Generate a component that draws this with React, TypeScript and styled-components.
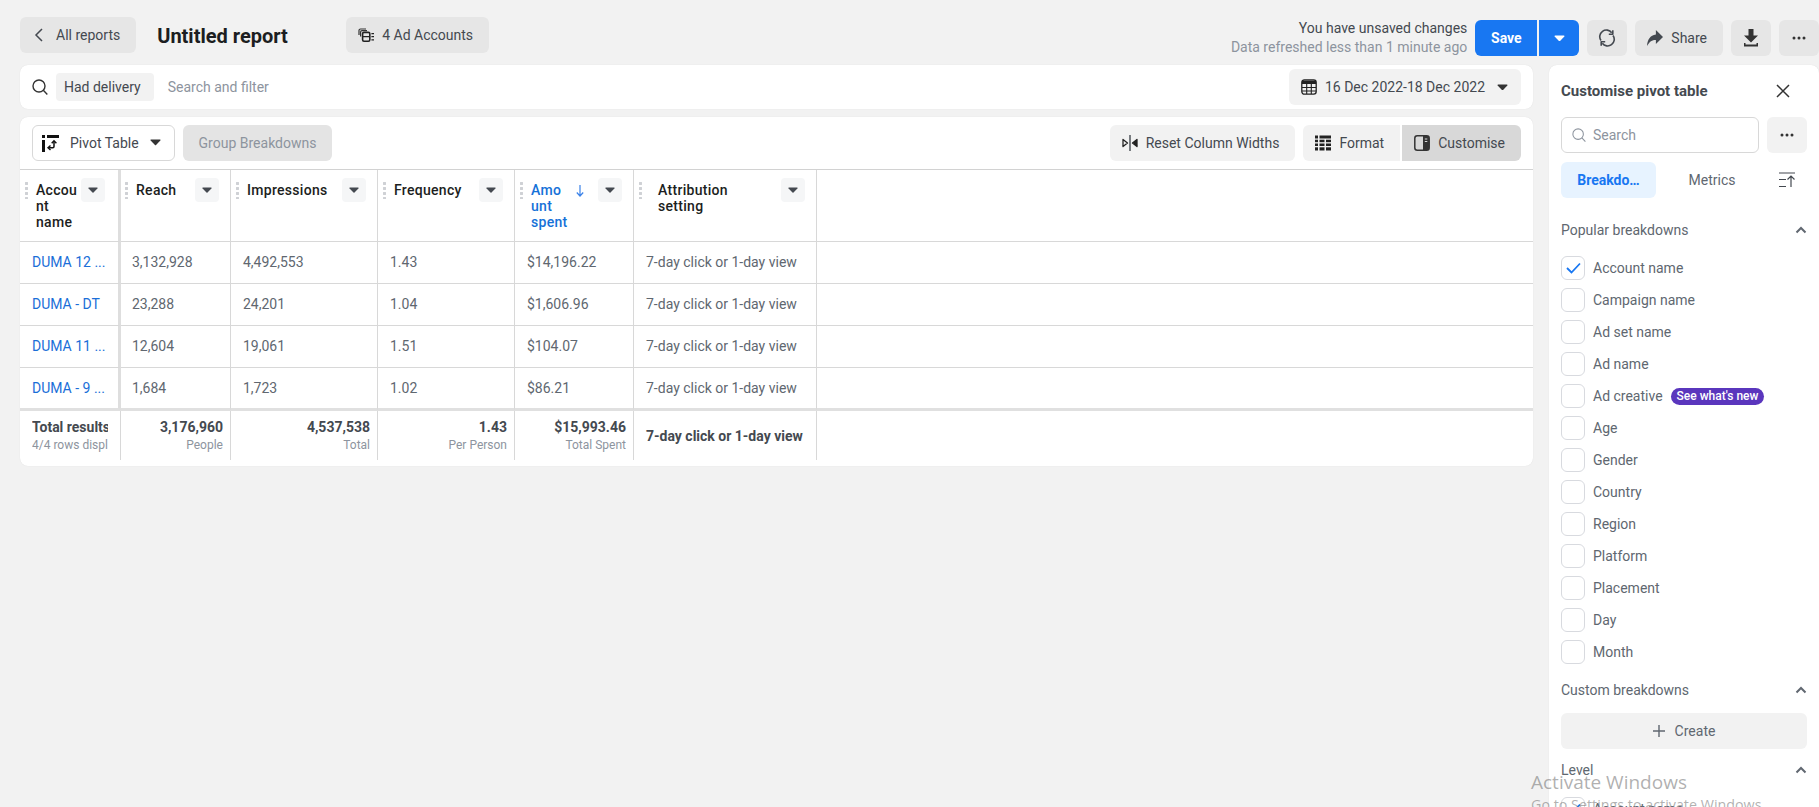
import React from "react";
import styled, { createGlobalStyle } from "styled-components";

const Global = createGlobalStyle`
  html, body { margin: 0; padding: 0; background: #f2f2f2; }
  body { font-family: Roboto, "Liberation Sans", sans-serif; font-size: 14px; color: #444950; }
  * { box-sizing: border-box; }
`;

const Page = styled.div`
  position: relative;
  width: 1819px;
  height: 807px;
  overflow: hidden;
  background: #f2f2f2;
`;

const TopBar = styled.header`
  display: flex;
  align-items: flex-start;
  height: 65px;
  padding: 17px 0 0 20px;
`;

const Button = styled.div<{ $bg?: string; $color?: string; $pl?: number; $pr?: number; $gap?: number; $w?: number }>`
  display: flex;
  align-items: center;
  justify-content: ${(p) => (p.$w ? "center" : "flex-start")};
  flex: none;
  height: 36px;
  width: ${(p) => (p.$w ? `${p.$w}px` : "auto")};
  padding: ${(p) => (p.$w ? "0" : `0 ${p.$pr ?? 16}px 0 ${p.$pl ?? 12}px`)};
  gap: ${(p) => p.$gap ?? 8}px;
  border-radius: 6px;
  background: ${(p) => p.$bg ?? "#e6e6e6"};
  color: ${(p) => p.$color ?? "#444950"};
  font-size: 14px;
  white-space: nowrap;
`;

const Title = styled.h1`
  flex: none;
  width: 130px;
  margin: 6px 59px 0 21px;
  font-size: 20px;
  line-height: 26px;
  font-weight: 700;
  color: #1c1e21;
  white-space: nowrap;
`;

const TopRight = styled.div`
  display: flex;
  align-items: center;
  gap: 8px;
  margin: 2px 0 0 auto;
`;

const Status = styled.div`
  text-align: right;
  font-size: 14px;
  line-height: 19px;
  color: #444950;
  white-space: nowrap;
`;

const StatusSub = styled.div`
  color: #8d949e;
`;

const SaveGroup = styled.div`
  display: flex;
  gap: 2px;
`;

const SaveButton = styled(Button)`
  border-radius: 6px 0 0 6px;
  font-weight: 700;
`;

const SaveCaret = styled(Button)`
  border-radius: 0 6px 6px 0;
`;

const Main = styled.main`
  display: flex;
  gap: 16px;
  height: 742px;
  padding-left: 20px;
`;

const LeftColumn = styled.section`
  flex: none;
  width: 1513px;
  display: flex;
  flex-direction: column;
  gap: 8px;
`;

const FilterBar = styled.div`
  display: flex;
  align-items: center;
  height: 44px;
  padding: 0 12px;
  background: #fff;
  border-radius: 8px;
  box-shadow: 0 0 1px rgba(0, 0, 0, 0.12);
`;

const Chip = styled.div`
  display: flex;
  align-items: center;
  height: 28px;
  margin-left: 8px;
  padding: 0 13px 0 8px;
  background: #f2f2f2;
  border-radius: 4px;
  color: #444950;
`;

const Placeholder = styled.div`
  margin-left: 14px;
  color: #8d949e;
`;

const DateButton = styled(Button)`
  margin-left: auto;
  background: #f2f2f2;
`;

const DateCaret = styled.span`
  display: flex;
  margin-left: 4px;
`;

const TableCard = styled.div`
  height: 349px;
  background: #fff;
  border-radius: 8px;
  box-shadow: 0 0 1px rgba(0, 0, 0, 0.12);
`;

const Toolbar = styled.div`
  display: flex;
  align-items: center;
  gap: 8px;
  height: 53px;
  padding: 0 12px 1px;
  border-bottom: 1px solid #d2d2d2;
`;

const PivotButton = styled(Button)`
  background: #fff;
  border: 1px solid #d8d8d8;
`;

const ToolbarRight = styled.div`
  display: flex;
  gap: 8px;
  margin-left: auto;
`;

const Segment = styled.div`
  display: flex;
  gap: 2px;
`;

const SegmentLeft = styled(Button)`
  border-radius: 6px 0 0 6px;
`;

const SegmentRight = styled(Button)`
  border-radius: 0 6px 6px 0;
`;

const Grid = styled.div`
  display: grid;
  grid-template-columns: 101px 110px 147px 137px 119px 183px 1fr;
  grid-template-rows: 72px 42px 42px 42px 43px 49px;
`;

const HeaderCell = styled.div<{ $thick?: boolean; $pl?: number }>`
  display: flex;
  align-items: flex-start;
  padding: 8px ${(p) => (p.$thick ? 13 : 11)}px 0 ${(p) => p.$pl ?? 5}px;
  border-bottom: 1px solid #d8d8d8;
  border-right: ${(p) => (p.$thick ? "3px" : "1px")} solid ${(p) => (p.$thick ? "#dedede" : "#d8d8d8")};
`;

const Grip = styled.span`
  flex: none;
  width: 3px;
  height: 18px;
  margin-top: 3px;
  background: radial-gradient(circle, #cfd1d5 1.4px, transparent 1.6px) 0 0 / 3px 5px repeat-y;
`;

const HeaderLabel = styled.div<{ $indent?: number; $active?: boolean }>`
  flex: 1;
  display: block;
  margin: 4px 0 0 ${(p) => p.$indent ?? 8}px;
  font-size: 14px;
  line-height: 16px;
  font-weight: 500;
  letter-spacing: 0.3px;
  color: ${(p) => (p.$active ? "#1571d8" : "#1c1e21")};
  white-space: nowrap;
`;

const SortArrow = styled.span`
  display: inline-block;
  margin-left: 15px;
  vertical-align: -2px;
  line-height: 0;
`;

const CaretBox = styled.div`
  flex: none;
  display: flex;
  align-items: center;
  justify-content: center;
  width: 24px;
  height: 24px;
  background: #f5f6f7;
  border-radius: 4px;
`;

const BodyCell = styled.div<{ $thick?: boolean; $heavy?: boolean; $pl?: number }>`
  display: flex;
  align-items: center;
  min-width: 0;
  padding: 0 0 ${(p) => (p.$heavy ? 0 : 1)}px ${(p) => p.$pl ?? 12}px;
  border-bottom: ${(p) => (p.$heavy ? "3px solid #e0e0e0" : "1px solid #d8d8d8")};
  border-right: ${(p) => (p.$thick ? "3px solid #dedede" : "1px solid #d8d8d8")};
  color: #606770;
  white-space: nowrap;
`;

const AccountLink = styled.span`
  color: #1a6ed8;
`;

const FillerCell = styled.div<{ $heavy?: boolean }>`
  border-bottom: ${(p) => (p.$heavy ? "3px solid #e0e0e0" : "1px solid #d8d8d8")};
`;

const FooterCell = styled.div<{ $align?: string }>`
  display: flex;
  flex-direction: column;
  justify-content: center;
  align-items: ${(p) => p.$align ?? "flex-end"};
  min-width: 0;
  padding: 0 7px 0 12px;
  border-right: 1px solid #d8d8d8;
  overflow: hidden;
  white-space: nowrap;
`;

const FooterMain = styled.div`
  font-weight: 700;
  font-size: 14px;
  line-height: 18px;
  color: #444950;
`;

const FooterSub = styled.div`
  font-size: 12px;
  line-height: 18px;
  color: #8d949e;
`;

const ClipBox = styled.div`
  width: 76px;
  overflow: hidden;
`;

const Panel = styled.aside`
  flex: none;
  width: 270px;
  height: 742px;
  padding: 0 12px;
  background: #fff;
  border-radius: 8px 8px 0 0;
  box-shadow: 0 0 1px rgba(0, 0, 0, 0.12);
  overflow: hidden;
`;

const PanelHead = styled.div`
  display: flex;
  align-items: center;
  justify-content: space-between;
  height: 52px;
`;

const PanelTitle = styled.div`
  font-size: 15px;
  font-weight: 700;
  color: #444950;
`;

const CloseWrap = styled.span`
  display: flex;
  margin-right: 17px;
`;

const SearchRow = styled.div`
  display: flex;
  gap: 8px;
`;

const SearchInput = styled.div`
  display: flex;
  align-items: center;
  gap: 7px;
  flex: 1;
  height: 36px;
  padding: 0 10px;
  border: 1px solid #d8d8d8;
  border-radius: 6px;
  color: #8d949e;
`;

const Tabs = styled.div`
  display: flex;
  align-items: center;
  margin-top: 9px;
  height: 36px;
`;

const Tab = styled.div<{ $active?: boolean }>`
  display: flex;
  align-items: center;
  justify-content: center;
  flex: none;
  width: ${(p) => (p.$active ? 95 : 112)}px;
  height: 36px;
  border-radius: 6px;
  background: ${(p) => (p.$active ? "#e7f3ff" : "transparent")};
  color: ${(p) => (p.$active ? "#1877f2" : "#606770")};
  font-weight: ${(p) => (p.$active ? 700 : 400)};
`;

const SortIconWrap = styled.div`
  flex: 1;
  display: flex;
  justify-content: center;
`;

const SectionHead = styled.div<{ $mt: number }>`
  display: flex;
  align-items: center;
  justify-content: space-between;
  height: 24px;
  margin-top: ${(p) => p.$mt}px;
  color: #606770;
`;

const ChevronWrap = styled.span`
  display: flex;
`;

const CheckList = styled.div<{ $mt: number }>`
  margin-top: ${(p) => p.$mt}px;
`;

const CheckRow = styled.div`
  display: flex;
  align-items: center;
  height: 32px;
  gap: 8px;
  color: #606770;
`;

const CheckBox = styled.div`
  flex: none;
  display: flex;
  align-items: center;
  justify-content: center;
  width: 24px;
  height: 24px;
  border: 1px solid #d8dadf;
  border-radius: 6px;
`;

const Badge = styled.span`
  display: inline-flex;
  align-items: center;
  height: 17px;
  padding: 0 6px;
  border-radius: 9px;
  background: #5a36bd;
  color: #fff;
  font-size: 12px;
  font-weight: 500;
`;

const CreateButton = styled.div`
  display: flex;
  align-items: center;
  justify-content: center;
  gap: 10px;
  height: 36px;
  margin-top: 11px;
  background: #f2f2f2;
  border-radius: 6px;
  color: #606770;
`;

const Activation = styled.div`
  position: absolute;
  left: 1531px;
  top: 769px;
  font-family: "Open Sans", sans-serif;
  color: rgba(110, 110, 110, 0.55);
  white-space: nowrap;
  pointer-events: none;
`;

const ActivationTitle = styled.div`
  font-size: 19px;
  line-height: 26px;
`;

const ActivationSub = styled.div`
  font-size: 14.3px;
  line-height: 19px;
`;

/* ---------- icons ---------- */

const Caret = ({ w = 10, c = "#444950" }: { w?: number; c?: string }) => (
  <svg width={w} height={w * 0.6} viewBox="0 0 10 6">
    <path d="M1 .5h8c.5 0 .7.5.4.9L5.5 5.4c-.3.3-.7.3-1 0L.6 1.4C.3 1 .5.5 1 .5z" fill={c} />
  </svg>
);

const ChevronLeft = () => (
  <svg width="16" height="16" viewBox="0 0 16 16" fill="none" stroke="#444950" strokeWidth="1.5">
    <path d="M11 2 5 8l6 6" />
  </svg>
);

const AccountsIcon = () => (
  <svg width="16" height="16" viewBox="0 0 16 16" fill="none">
    <path d="M1 8V3.5C1 2.7 1.7 2 2.5 2H8" stroke="#333" strokeWidth="1.2" />
    <path d="M2.6 9.5V5c0-.8.6-1.4 1.4-1.4h5" stroke="#333" strokeWidth="1.2" />
    <rect x="4.6" y="5.4" width="7.2" height="8.8" rx="1.4" stroke="#222" strokeWidth="1.6" />
    <path d="M4.8 9.7h7M13.4 6.6H16M13.4 9.7H16M13.4 12.8H16" stroke="#222" strokeWidth="1.3" />
  </svg>
);

const SearchIcon = ({ s = 16, c = "#333", sw = 1.4 }: { s?: number; c?: string; sw?: number }) => (
  <svg width={s} height={s} viewBox="0 0 16 16" fill="none" stroke={c} strokeWidth={sw}>
    <circle cx="7" cy="7" r="6" />
    <path d="m11.3 11.3 4 4.2" />
  </svg>
);

const CalendarIcon = () => (
  <svg width="16" height="16" viewBox="0 0 16 16" fill="none">
    <rect x=".8" y=".8" width="14.4" height="14.4" rx="2.6" stroke="#222" strokeWidth="1.3" />
    <path d="M1 1.5h14V5H1z" fill="#222" />
    <path d="M1 8.5h14M1 12h14M5.7 5v10M10.3 5v10" stroke="#222" strokeWidth="1.1" />
  </svg>
);

const PivotIcon = () => (
  <svg width="17" height="18" viewBox="0 0 17 18" fill="none">
    <path d="M0 1h3v3H0zM5 1h12v3H5zM0 6h3v12H0z" fill="#111" />
    <path d="M12 7.5v5c0 .8-.5 1.2-1.2 1.2H6.5" stroke="#111" strokeWidth="1.5" />
    <path d="m8.5 11.5-2.5 2.3 2.5 2.3M9.7 9.3 12 6.8l2.4 2.5" stroke="#111" strokeWidth="1.4" />
  </svg>
);

const ResetIcon = () => (
  <svg width="16" height="16" viewBox="0 0 16 16" fill="none">
    <path d="M8 0v16" stroke="#444950" strokeWidth="1.4" />
    <path d="M1 4.5 5.5 8 1 11.5z" stroke="#222" strokeWidth="1.3" strokeLinejoin="round" />
    <path d="M15 4.5 10.5 8l4.5 3.5z" fill="#222" stroke="#222" strokeWidth="1.3" strokeLinejoin="round" />
  </svg>
);

const FormatIcon = () => (
  <svg width="16" height="16" viewBox="0 0 16 16" fill="#222">
    <rect x="0" y="0.5" width="3" height="3" />
    <rect x="4.5" y="0.5" width="11.5" height="3" />
    <rect x="0" y="4.7" width="3" height="2.5" />
    <rect x="4.5" y="4.7" width="5" height="2.5" />
    <rect x="11" y="4.7" width="5" height="2.5" />
    <rect x="0" y="8.5" width="3" height="2.5" />
    <rect x="4.5" y="8.5" width="5" height="2.5" />
    <rect x="11" y="8.5" width="5" height="2.5" />
    <rect x="0" y="12.3" width="3" height="3.2" />
    <rect x="4.5" y="12.3" width="5" height="3.2" />
    <rect x="11" y="12.3" width="5" height="3.2" />
  </svg>
);

const CustomiseIcon = () => (
  <svg width="16" height="16" viewBox="0 0 16 16" fill="none">
    <rect x="0.8" y="0.8" width="14.4" height="14.4" rx="2.5" stroke="#333" strokeWidth="1.5" />
    <path d="M9 1h4.5A1.5 1.5 0 0 1 15 2.5v11a1.5 1.5 0 0 1-1.5 1.5H9z" fill="#333" />
    <path d="M10.8 4h2.5M10.8 6.5h2.5" stroke="#d8d8d8" strokeWidth="1" />
  </svg>
);

const RefreshIcon = () => (
  <svg width="18" height="18" viewBox="0 0 18 18" fill="none" stroke="#444950" strokeWidth="1.6">
    <path d="M3 11.5A6.5 6.5 0 0 1 13.7 3.8" />
    <path d="M15 6.5A6.5 6.5 0 0 1 4.3 14.2" />
    <path d="M14.8 1.2v4h-4" strokeLinejoin="round" />
    <path d="M3.2 16.8v-4h4" strokeLinejoin="round" />
  </svg>
);

const ShareIcon = () => (
  <svg width="16" height="16" viewBox="0 0 18 16" fill="#444950" preserveAspectRatio="none">
    <path d="M10 0l8 7-8 7v-4C5.5 10 3 11.5 0 16c.5-6 3.5-11 10-11.5z" />
  </svg>
);

const DownloadIcon = () => (
  <svg width="16" height="18" viewBox="0 0 16 18" fill="#333">
    <path d="M5.5 0h5v6.5H15L8 13.500 1 6.500h4.500z" />
    <path d="M1 14h1.5v1.5h11V14H15v3.500H1z" />
  </svg>
);

const Dots = () => (
  <svg width="14" height="4" viewBox="0 0 14 4" fill="#333">
    <circle cx="2" cy="2" r="1.5" />
    <circle cx="7" cy="2" r="1.5" />
    <circle cx="12" cy="2" r="1.5" />
  </svg>
);

const DownArrow = ({ c = "#3b82e8", w = 8, h = 13 }: { c?: string; w?: number; h?: number }) => (
  <svg width={w} height={h} viewBox="0 0 8 13" fill="none" stroke={c} strokeWidth="1.2">
    <path d="M4 1v11M.8 8.5 4 12l3.2-3.5" />
  </svg>
);

const CloseIcon = () => (
  <svg width="14" height="14" viewBox="0 0 14 14" stroke="#333" strokeWidth="1.5" fill="none">
    <path d="m1 1 12 12M13 1 1 13" />
  </svg>
);

const SortIcon = () => (
  <svg width="17" height="16" viewBox="0 0 17 16" fill="none" stroke="#444950" strokeWidth="1.2">
    <path d="M0 1h16M0 7.5h7M0 14.5h7M12 15V4M8.5 7.5 12 4l3.5 3.5" />
  </svg>
);

const ChevronUp = () => (
  <svg width="12" height="8" viewBox="0 0 12 8" fill="none" stroke="#606770" strokeWidth="2">
    <path d="m1.5 6.5 4.5-4.5 4.5 4.5" />
  </svg>
);

const PlusIcon = () => (
  <svg width="12" height="12" viewBox="0 0 12 12" stroke="#606770" strokeWidth="1.4">
    <path d="M6 0v12M0 6h12" />
  </svg>
);

const CheckMark = () => (
  <svg width="15" height="12" viewBox="0 0 15 12" fill="none" stroke="#1877f2" strokeWidth="1.8">
    <path d="m1 6 4.5 4.5L14 1.5" />
  </svg>
);

/* ---------- data ---------- */

const rows = [
  ["DUMA 12 ...", "3,132,928", "4,492,553", "1.43", "$14,196.22"],
  ["DUMA - DT", "23,288", "24,201", "1.04", "$1,606.96"],
  ["DUMA 11 ...", "12,604", "19,061", "1.51", "$104.07"],
  ["DUMA - 9 ...", "1,684", "1,723", "1.02", "$86.21"],
];

const attribution = "7-day click or 1-day view";

const totals = [
  ["3,176,960", "People"],
  ["4,537,538", "Total"],
  ["1.43", "Per Person"],
  ["$15,993.46", "Total Spent"],
];

const breakdowns = [
  "Account name", "Campaign name", "Ad set name", "Ad name", "Ad creative", "Age", "Gender",
  "Country", "Region", "Platform", "Placement", "Day", "Month",
];

const Header = ({ thick, indent, active, pl, children }: { thick?: boolean; indent?: number; active?: boolean; pl?: number; children: React.ReactNode }) => (
  <HeaderCell $thick={thick} $pl={pl}>
    <Grip />
    <HeaderLabel $indent={indent} $active={active}>{children}</HeaderLabel>
    <CaretBox><Caret /></CaretBox>
  </HeaderCell>
);

export default function App() {
  return (
    <Page>
      <Global />
      <TopBar>
        <Button $pl={11} $pr={16} $gap={9}><ChevronLeft />All reports</Button>
        <Title>Untitled report</Title>
        <Button $pl={12} $pr={16}><AccountsIcon />4 Ad Accounts</Button>
        <TopRight>
          <Status>
            You have unsaved changes
            <StatusSub>Data refreshed less than 1 minute ago</StatusSub>
          </Status>
          <SaveGroup>
            <SaveButton $bg="#1877f2" $color="#fff" $w={62}>Save</SaveButton>
            <SaveCaret $bg="#1877f2" $w={40}><Caret w={11} c="#fff" /></SaveCaret>
          </SaveGroup>
          <Button $w={40}><RefreshIcon /></Button>
          <Button $pl={12} $pr={16} $gap={8}><ShareIcon />Share</Button>
          <Button $w={40}><DownloadIcon /></Button>
          <Button $w={40}><Dots /></Button>
        </TopRight>
      </TopBar>
      <Main>
        <LeftColumn>
          <FilterBar>
            <SearchIcon />
            <Chip>Had delivery</Chip>
            <Placeholder>Search and filter</Placeholder>
            <DateButton $pl={12} $pr={13} $gap={8}>
              <CalendarIcon />16 Dec 2022-18 Dec 2022
              <DateCaret><Caret w={11} c="#333" /></DateCaret>
            </DateButton>
          </FilterBar>
          <TableCard>
            <Toolbar>
              <PivotButton $pl={9} $pr={13} $gap={11}><PivotIcon />Pivot Table<Caret w={11} c="#333" /></PivotButton>
              <Button $bg="#e4e4e4" $color="#8d949e" $pl={16} $pr={16}>Group Breakdowns</Button>
              <ToolbarRight>
                <Button $bg="#f2f2f2" $pl={12} $pr={16}><ResetIcon />Reset Column Widths</Button>
                <Segment>
                  <SegmentLeft $bg="#f2f2f2" $pl={12} $pr={16} $gap={8}><FormatIcon />Format</SegmentLeft>
                  <SegmentRight $bg="#d8d8d8" $pl={12} $pr={16}><CustomiseIcon />Customise</SegmentRight>
                </Segment>
              </ToolbarRight>
            </Toolbar>
            <Grid>
              <Header thick>Accou<br />nt<br />name</Header>
              <Header pl={4}>Reach</Header>
              <Header>Impressions</Header>
              <Header>Frequency</Header>
              <Header active>
                Amo<SortArrow><DownArrow /></SortArrow><br />unt<br />spent
              </Header>
              <Header indent={16}>Attribution<br />setting</Header>
              <FillerCell />
              {rows.map((r, i) => {
                const heavy = i === rows.length - 1;
                return (
                  <React.Fragment key={r[0]}>
                    <BodyCell $thick $heavy={heavy}><AccountLink>{r[0]}</AccountLink></BodyCell>
                    {r.slice(1).map((v, j) => <BodyCell key={v} $heavy={heavy} $pl={j === 0 ? 11 : 12}>{v}</BodyCell>)}
                    <BodyCell $heavy={heavy}>{attribution}</BodyCell>
                    <FillerCell $heavy={heavy} />
                  </React.Fragment>
                );
              })}
              <FooterCell $align="flex-start">
                <ClipBox>
                  <FooterMain>Total results</FooterMain>
                  <FooterSub>4/4 rows displayed</FooterSub>
                </ClipBox>
              </FooterCell>
              {totals.map(([a, b]) => (
                <FooterCell key={a}>
                  <FooterMain>{a}</FooterMain>
                  <FooterSub>{b}</FooterSub>
                </FooterCell>
              ))}
              <FooterCell $align="flex-start"><FooterMain>{attribution}</FooterMain></FooterCell>
            </Grid>
          </TableCard>
        </LeftColumn>
        <Panel>
          <PanelHead>
            <PanelTitle>Customise pivot table</PanelTitle>
            <CloseWrap><CloseIcon /></CloseWrap>
          </PanelHead>
          <SearchRow>
            <SearchInput><SearchIcon s={14} c="#8d949e" sw={1.2} />Search</SearchInput>
            <Button $bg="#f2f2f2" $w={40}><Dots /></Button>
          </SearchRow>
          <Tabs>
            <Tab $active>Breakdo…</Tab>
            <Tab>Metrics</Tab>
            <SortIconWrap><SortIcon /></SortIconWrap>
          </Tabs>
          <SectionHead $mt={20}>Popular breakdowns<ChevronWrap><ChevronUp /></ChevronWrap></SectionHead>
          <CheckList $mt={10}>
            {breakdowns.map((b, i) => (
              <CheckRow key={b}>
                <CheckBox>{i === 0 && <CheckMark />}</CheckBox>
                {b}
                {b === "Ad creative" && <Badge>See what's new</Badge>}
              </CheckRow>
            ))}
          </CheckList>
          <SectionHead $mt={10}>Custom breakdowns<ChevronWrap><ChevronUp /></ChevronWrap></SectionHead>
          <CreateButton><PlusIcon />Create</CreateButton>
          <SectionHead $mt={9}>Level<ChevronWrap><ChevronUp /></ChevronWrap></SectionHead>
          <CheckList $mt={11}>
            <CheckRow><CheckBox><CheckMark /></CheckBox>Account name</CheckRow>
          </CheckList>
        </Panel>
      </Main>
      <Activation>
        <ActivationTitle>Activate Windows</ActivationTitle>
        <ActivationSub>Go to Settings to activate Windows.</ActivationSub>
      </Activation>
    </Page>
  );
}
